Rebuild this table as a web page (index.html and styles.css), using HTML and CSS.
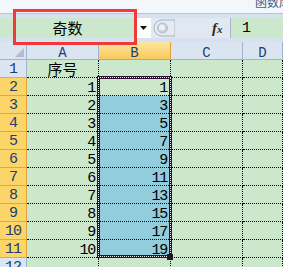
FILE: index.html
```html
<!DOCTYPE html>
<html>
<head>
<meta charset="utf-8">
<link rel="stylesheet" href="styles.css">
</head>
<body>
<div class="app">
  <div class="ribbon"><span class="ribbon-text">函数库</span></div>
  <div class="fbar">
    <div class="namebox">奇数</div>
    <div class="nb-drop"><svg width="7" height="4" viewBox="0 0 7 4"><path d="M0 0H7L3.5 4Z" fill="#111"/></svg></div>
    <div class="fb-tools">
      <svg class="knob" width="22" height="18" viewBox="0 0 22 18"><path d="M9 1H22V17H9A8 8 0 0 1 9 1Z" fill="#e6ebf2" stroke="#a9b5c6"/><circle cx="9.5" cy="9" r="5" fill="#c9d0db" stroke="#b3bccb"/><circle cx="9" cy="8.5" r="3" fill="#eef1f5"/></svg>
      <span class="fx">f<span class="fx-x">x</span></span>
    </div>
    <div class="formula">1</div>
  </div>
  <div class="sheet">
    <div class="grid">
      <div class="corner"><span class="corner-tri"></span></div>
      <div class="colh">A</div>
      <div class="colh colh-sel">B</div>
      <div class="colh">C</div>
      <div class="colh">D</div>

      <div class="rowh">1</div>
      <div class="cell cell-center cjk">序号</div>
      <div class="cell"></div>
      <div class="cell"></div>
      <div class="cell"></div>

      <div class="rowh rowh-sel">2</div>
      <div class="cell num">1</div>
      <div class="cell num">1</div>
      <div class="cell"></div>
      <div class="cell"></div>

      <div class="rowh rowh-sel">3</div>
      <div class="cell num">2</div>
      <div class="cell num sel">3</div>
      <div class="cell"></div>
      <div class="cell"></div>

      <div class="rowh rowh-sel">4</div>
      <div class="cell num">3</div>
      <div class="cell num sel">5</div>
      <div class="cell"></div>
      <div class="cell"></div>

      <div class="rowh rowh-sel">5</div>
      <div class="cell num">4</div>
      <div class="cell num sel">7</div>
      <div class="cell"></div>
      <div class="cell"></div>

      <div class="rowh rowh-sel">6</div>
      <div class="cell num">5</div>
      <div class="cell num sel">9</div>
      <div class="cell"></div>
      <div class="cell"></div>

      <div class="rowh rowh-sel">7</div>
      <div class="cell num">6</div>
      <div class="cell num sel">11</div>
      <div class="cell"></div>
      <div class="cell"></div>

      <div class="rowh rowh-sel">8</div>
      <div class="cell num">7</div>
      <div class="cell num sel">13</div>
      <div class="cell"></div>
      <div class="cell"></div>

      <div class="rowh rowh-sel">9</div>
      <div class="cell num">8</div>
      <div class="cell num sel">15</div>
      <div class="cell"></div>
      <div class="cell"></div>

      <div class="rowh rowh-sel">10</div>
      <div class="cell num">9</div>
      <div class="cell num sel">17</div>
      <div class="cell"></div>
      <div class="cell"></div>

      <div class="rowh rowh-sel">11</div>
      <div class="cell num">10</div>
      <div class="cell num sel">19</div>
      <div class="cell"></div>
      <div class="cell"></div>

      <div class="rowh">12</div>
      <div class="cell"></div>
      <div class="cell"></div>
      <div class="cell"></div>
      <div class="cell"></div>
    </div>
    <div class="selection"></div>
    <div class="handle"></div>
  </div>
  <div class="callout"></div>
</div>
</body>
</html>
```
FILE: styles.css
```css
html, body {
  margin: 0;
  padding: 0;
}
body {
  width: 283px;
  height: 267px;
  overflow: hidden;
  background: #ffffff;
}
.app {
  position: relative;
  width: 283px;
  height: 267px;
  overflow: hidden;
}
.ribbon {
  height: 13px;
  background: #f3f6fb;
  border-bottom: 1px solid #b4c3d9;
  overflow: hidden;
  padding-left: 255px;
  white-space: nowrap;
}
.ribbon-text {
  display: block;
  margin-top: -5px;
  font-family: "Noto Sans CJK SC", sans-serif;
  font-size: 12px;
  line-height: 14px;
  color: #4c5c78;
}
.fbar {
  display: flex;
  height: 20px;
  padding: 4px 0;
  background: #d7e2f0;
}
.namebox {
  width: 135px;
  background: #cce8cc;
  text-align: center;
  font-family: "Noto Sans CJK SC", sans-serif;
  font-size: 15px;
  line-height: 20px;
  color: #000;
}
.nb-drop {
  width: 16px;
  background: #ffffff;
  display: flex;
  align-items: center;
  justify-content: center;
}
.fb-tools {
  width: 77px;
  background: #e1e8f2;
  border-right: 1px solid #a7b6cc;
  display: flex;
  align-items: center;
  padding-left: 2px;
}
.knob {
  display: block;
}
.fx {
  margin-left: 37px;
  font-family: "Liberation Serif", serif;
  font-style: italic;
  font-weight: bold;
  font-size: 15px;
  color: #2b2b2b;
  line-height: 20px;
}
.fx-x {
  font-size: 11px;
}
.formula {
  flex: 1;
  background: #cce8cc;
  padding-left: 11px;
  font-family: "Liberation Mono", monospace;
  font-size: 15px;
  line-height: 21px;
  color: #000;
}
.sheet {
  position: relative;
}
.grid {
  display: grid;
  grid-template-columns: 27px 72px 72px 72px 40px;
  grid-auto-rows: 18px;
}
.grid > div {
  box-sizing: border-box;
}
.corner {
  position: relative;
  background: #dbe5f2;
  border-right: 1px solid #9fb4cd;
  border-bottom: 1px solid #9fb4cd;
}
.corner-tri {
  position: absolute;
  right: 2px;
  bottom: 2px;
  width: 0;
  height: 0;
  border-left: 9px solid transparent;
  border-bottom: 9px solid #b3bccb;
}
.colh {
  background: #dbe5f2;
  border-right: 1px solid #9fb4cd;
  border-bottom: 1px solid #9fb4cd;
  text-align: center;
  font-family: "Liberation Mono", monospace;
  font-size: 14px;
  line-height: 14px;
  padding-top: 4px;
  color: #213d70;
}
.colh-sel {
  background: linear-gradient(#fde6a0, #f8ca5a);
  border-right-color: #e2a23a;
  border-bottom-color: #e2a23a;
}
.rowh {
  background: #dbe5f2;
  border-right: 1px solid #9fb4cd;
  border-bottom: 1px solid #9fb4cd;
  text-align: center;
  font-family: "Liberation Mono", monospace;
  font-size: 15px;
  letter-spacing: -1px;
  line-height: 14px;
  padding-top: 3px;
  color: #213d70;
}
.rowh-sel {
  background: #fcd568;
  border-right-color: #e2a23a;
  border-bottom-color: #e3a446;
}
.cell {
  background: #cce8cc;
  border-right: 1px dotted #000;
  border-bottom: 1px dotted #000;
}
.num {
  text-align: right;
  padding-right: 3px;
  padding-top: 4px;
  font-family: "Liberation Mono", monospace;
  font-size: 15px;
  letter-spacing: -1.2px;
  line-height: 14px;
  color: #000;
}
.cell-center {
  text-align: center;
}
.cjk {
  font-family: "Noto Sans CJK SC", sans-serif;
  font-size: 15px;
  line-height: 17px;
  color: #000;
}
.sel {
  background: #92cddd;
}
.selection {
  position: absolute;
  left: 97px;
  top: 34px;
  width: 75px;
  height: 182px;
  box-sizing: border-box;
  border: 3px solid #2e1030;
}
.selection::before {
  content: "";
  position: absolute;
  left: -2px;
  top: -2px;
  right: -2px;
  bottom: -2px;
  border: 1px dotted #f4eef4;
}
.handle {
  position: absolute;
  left: 167px;
  top: 212px;
  width: 6px;
  height: 6px;
  background: #24122a;
}
.callout {
  position: absolute;
  left: 13px;
  top: 9px;
  width: 124px;
  height: 36px;
  box-sizing: border-box;
  border: 3px solid #f03a3a;
}
```
